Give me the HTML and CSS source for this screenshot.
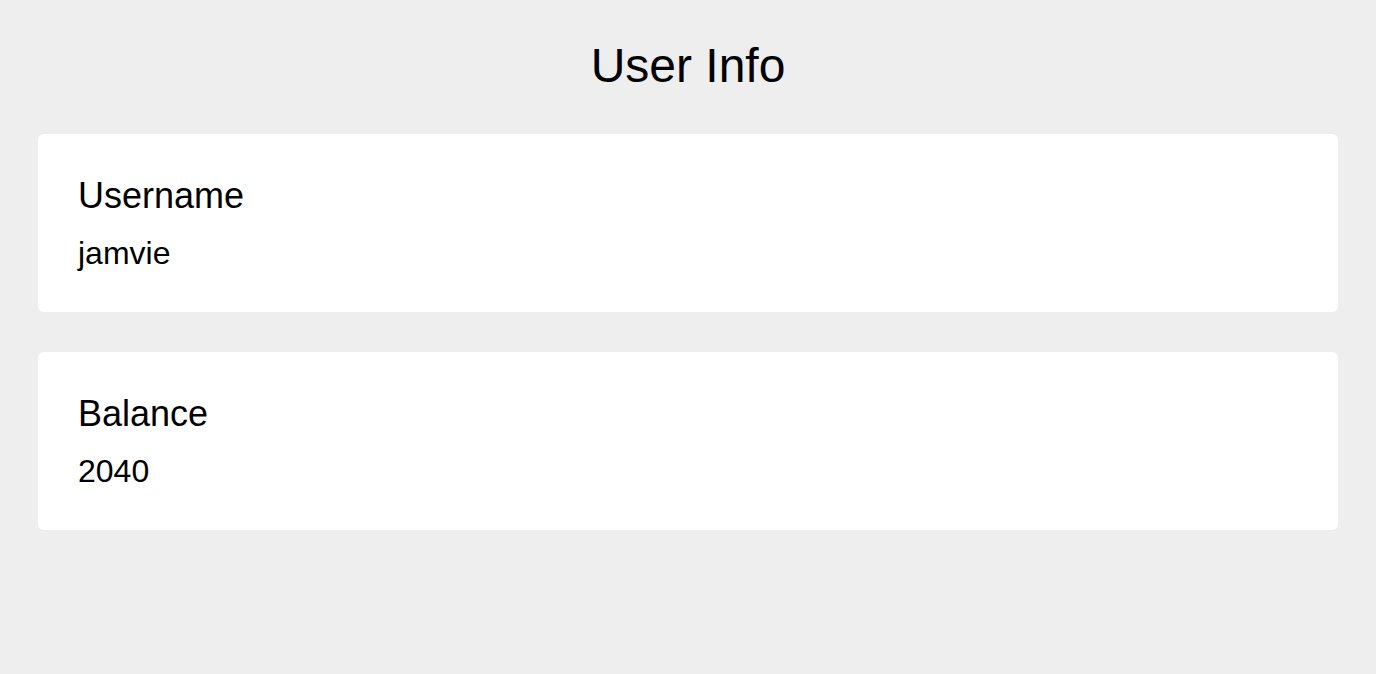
FILE: index.html
```html
<!DOCTYPE html>
<html lang="en">
<head>
<meta charset="utf-8">
<title>User Info</title>
<link rel="stylesheet" href="styles.css">
</head>
<body>
<main class="page">
  <h1 class="title">User Info</h1>
  <section class="card">
    <h2 class="label">Username</h2>
    <p class="value">jamvie</p>
  </section>
  <section class="card">
    <h2 class="label">Balance</h2>
    <p class="value">2040</p>
  </section>
</main>
</body>
</html>
```

FILE: styles.css
```css
html, body {
  margin: 0;
  padding: 0;
  background: #eeeeee;
  font-family: "Liberation Sans", Arial, Helvetica, sans-serif;
  color: #000;
}

.page {
  display: flex;
  flex-direction: column;
  gap: 40px;
  padding: 38px 38px 0;
}

.title {
  margin: 0 0 1px;
  font-size: 48px;
  line-height: 55px;
  font-weight: 400;
  text-align: center;
}

.card {
  background: #fff;
  border-radius: 6px;
  padding: 41px 40px 40px;
  display: flex;
  flex-direction: column;
}

.label {
  margin: 0 0 17px;
  font-size: 36px;
  line-height: 42px;
  font-weight: 400;
}

.value {
  margin: 0;
  font-size: 32px;
  line-height: 38px;
}
```
